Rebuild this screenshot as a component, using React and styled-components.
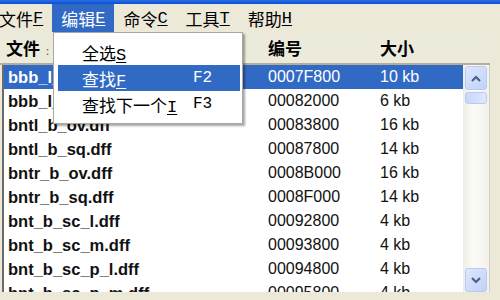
import React from "react"
import styled, { createGlobalStyle } from "styled-components"

const GlobalStyle = createGlobalStyle`
  html, body {
    margin: 0;
    padding: 0;
    background: #ece9d8;
    overflow: hidden;
  }
`

const cjk = `"Noto Sans CJK SC", sans-serif`
const mono = `"Liberation Mono", "DejaVu Sans Mono", monospace`

const Window = styled.div`
  position: relative;
  width: 500px;
  height: 300px;
  overflow: hidden;
  display: flex;
  flex-direction: column;
  background: #ece9d8;
`

const TitleStrip = styled.div`
  flex-shrink: 0;
  height: 4px;
  background: linear-gradient(#2a6ee6, #0a4fd0);
`

const MenuBar = styled.div`
  flex-shrink: 0;
  height: 28px;
  display: flex;
  align-items: stretch;
  margin-left: -10px;
  font-family: ${cjk};
  font-size: 17px;
  color: #000;
`

const MenuItem = styled.div`
  display: flex;
  align-items: center;
  padding: 0 9px;
  background: ${(p) => (p.$open ? "#316ac5" : "transparent")};
  color: ${(p) => (p.$open ? "#fff" : "#000")};
`

const Key = styled.span`
  font-family: ${mono};
  font-size: 17px;
  line-height: 1;
  text-decoration: underline;
  text-underline-offset: 2px;
`

const Dropdown = styled.div`
  position: absolute;
  left: 53px;
  top: 32px;
  width: 188px;
  padding: 6px 0 6px;
  background: #fff;
  border: 1px solid #aca899;
  box-shadow: 2px 2px 2px rgba(0, 0, 0, 0.35);
  font-family: ${cjk};
  font-size: 17px;
  z-index: 5;
`

const DropItem = styled.div`
  height: 26px;
  margin: 0 2px 0 4px;
  padding-left: 24px;
  display: grid;
  grid-template-columns: 111px 1fr;
  align-items: center;
  background: ${(p) => (p.$active ? "#316ac5" : "transparent")};
  color: ${(p) => (p.$active ? "#fff" : "#000")};
`

const Shortcut = styled.span`
  font-family: ${mono};
  font-size: 16px;
`

const Panel = styled.div`
  flex: 1;
  min-height: 0;
  display: flex;
  flex-direction: column;
  margin: 0 10px 8px 0;
`

const Header = styled.div`
  flex-shrink: 0;
  height: 31px;
  display: grid;
  grid-template-columns: 262px 112px 1fr;
  align-items: center;
  padding-left: 6px;
  background: #ebeadb;
  border-bottom: 2px solid #b3ad9a;
  font-family: ${cjk};
  font-size: 17px;
  font-weight: 700;
`

const SortMark = styled.span`
  font-size: 11px;
  font-weight: 400;
  color: #555;
  margin-left: 6px;
`

const ListBox = styled.div`
  flex: 1;
  min-height: 0;
  display: flex;
  margin-left: 2px;
  border-left: 2px solid #6c6c6c;
  border-right: 1px solid #d4d0c4;
  background: #fff;
  overflow: hidden;
`

const Rows = styled.div`
  flex: 1;
  overflow: hidden;
`

const Row = styled.div`
  height: 24px;
  display: grid;
  grid-template-columns: 260px 112px 1fr;
  align-items: center;
  padding-left: 4px;
  background: ${(p) => (p.$selected ? "#316ac5" : "#fff")};
  color: ${(p) => (p.$selected ? "#fff" : "#111")};
  font-family: "Liberation Sans", sans-serif;
  font-size: 16px;
  white-space: nowrap;
`

const Name = styled.span`
  font-weight: 700;
  font-size: 16.5px;
`

const ScrollBar = styled.div`
  width: 26px;
  display: flex;
  flex-direction: column;
  align-items: center;
  padding-top: 1px;
  background: linear-gradient(to right, #eeede5, #fbfbf8 40%, #f3f1ea);
`

const ScrollButton = styled.div`
  flex-shrink: 0;
  width: 22px;
  height: 24px;
  box-sizing: border-box;
  border: 1px solid #b8cbf4;
  border-radius: 3px;
  background: linear-gradient(135deg, #dde7fd, #c0d1fa);
  display: flex;
  align-items: center;
  justify-content: center;
  margin-top: ${(p) => (p.$end ? "auto" : "0")};
`

const Thumb = styled.div`
  flex-shrink: 0;
  width: 22px;
  height: 12px;
  margin-top: 2px;
  box-sizing: border-box;
  border: 1px solid #b8cbf4;
  border-radius: 3px;
  background: linear-gradient(to right, #c8d6fb, #dfe8fd);
`

const Chevron = ({ up }) => (
  <svg width="10" height="7" viewBox="0 0 10 7">
    <path
      d={up ? "M1 6 L5 2 L9 6" : "M1 1 L5 5 L9 1"}
      fill="none"
      stroke="#4d6185"
      strokeWidth="2.2"
    />
  </svg>
)

const files = [
  ["bbb_l_ov.dff", "0007F800", "10 kb"],
  ["bbb_l_sq.dff", "00082000", "6 kb"],
  ["bntl_b_ov.dff", "00083800", "16 kb"],
  ["bntl_b_sq.dff", "00087800", "14 kb"],
  ["bntr_b_ov.dff", "0008B000", "16 kb"],
  ["bntr_b_sq.dff", "0008F000", "14 kb"],
  ["bnt_b_sc_l.dff", "00092800", "4 kb"],
  ["bnt_b_sc_m.dff", "00093800", "4 kb"],
  ["bnt_b_sc_p_l.dff", "00094800", "4 kb"],
  ["bnt_b_sc_p_m.dff", "00095800", "4 kb"],
]

const menus = [
  ["文件", "F"],
  ["编辑", "E"],
  ["命令", "C"],
  ["工具", "T"],
  ["帮助", "H"],
]

const App = () => {
  return (
    <Window>
      <GlobalStyle />
      <TitleStrip />
      <MenuBar>
        {menus.map(([label, key]) => (
          <MenuItem key={label} $open={label === "编辑"}>
            {label}
            <Key>{key}</Key>
          </MenuItem>
        ))}
      </MenuBar>
      <Dropdown>
        <DropItem>
          <span>
            全选<Key>S</Key>
          </span>
        </DropItem>
        <DropItem $active>
          <span>
            查找<Key>F</Key>
          </span>
          <Shortcut>F2</Shortcut>
        </DropItem>
        <DropItem>
          <span>
            查找下一个<Key>I</Key>
          </span>
          <Shortcut>F3</Shortcut>
        </DropItem>
      </Dropdown>
      <Panel>
        <Header>
          <span>
            文件<SortMark>:</SortMark>
          </span>
          <span>编号</span>
          <span>大小</span>
        </Header>
        <ListBox>
          <Rows>
            {files.map(([name, id, size], i) => (
              <Row key={name} $selected={i === 0}>
                <Name>{name}</Name>
                <span>{id}</span>
                <span>{size}</span>
              </Row>
            ))}
          </Rows>
          <ScrollBar>
            <ScrollButton>
              <Chevron up />
            </ScrollButton>
            <Thumb />
            <ScrollButton $end>
              <Chevron />
            </ScrollButton>
          </ScrollBar>
        </ListBox>
      </Panel>
    </Window>
  )
}

export default App
